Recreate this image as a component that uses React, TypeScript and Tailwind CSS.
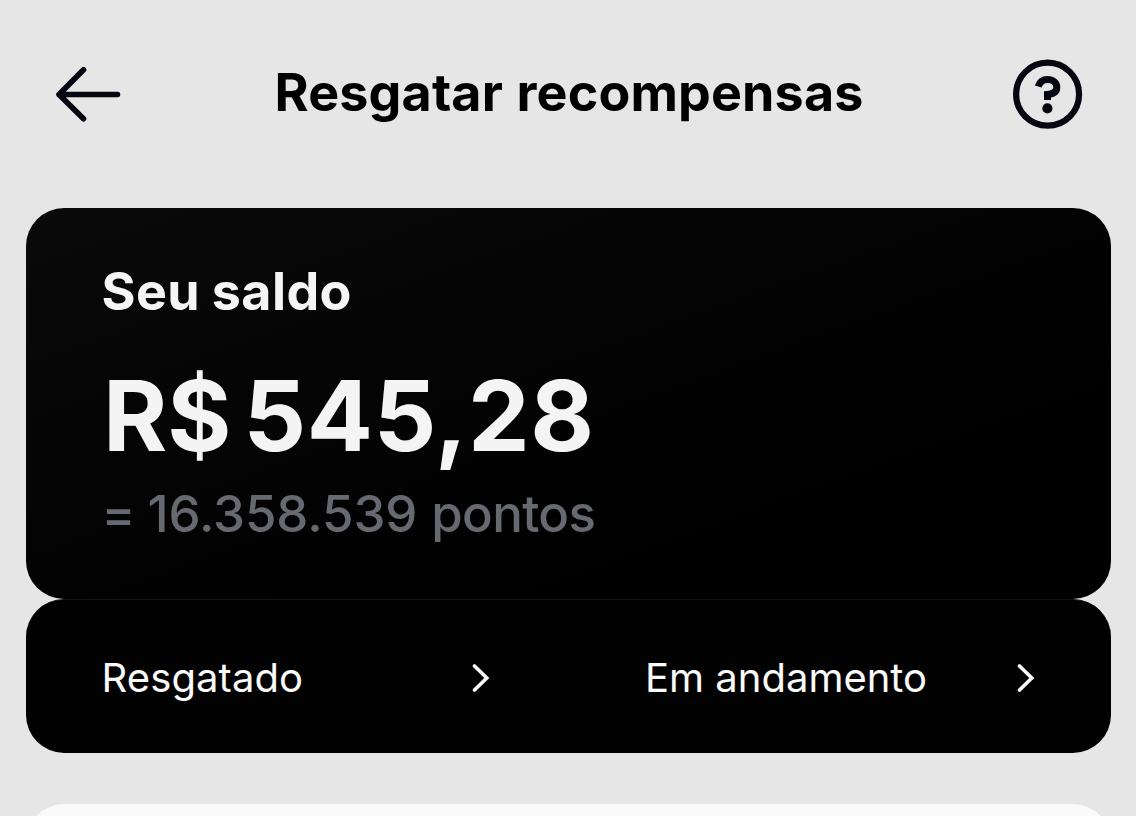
import React from "react";

const ArrowLeft = () => (
  <svg className="h-[60px] w-[68px]" viewBox="0 0 68 60" fill="none">
    <path
      d="M29.5 5.8 L5 30.5 L29.5 54.8 M5 30.5 H63.5"
      stroke="#05060f"
      strokeWidth="5.6"
      strokeLinecap="round"
      strokeLinejoin="round"
    />
  </svg>
);

const HelpCircle = () => (
  <svg className="h-[70px] w-[70px]" viewBox="0 0 70 70" fill="none">
    <circle cx="34.6" cy="35.2" r="31.5" stroke="#05060f" strokeWidth="6.2" />
    <path
      d="M25.2 27.6 C26.6 22.8 30 20.4 34.4 20.4 C40 20.4 43.8 23.6 43.8 28.2 C43.8 32.6 41 34.9 34.5 35.4 V41"
      stroke="#05060f"
      strokeWidth="7"
    />
    <circle cx="34.4" cy="49.4" r="5.1" fill="#05060f" />
  </svg>
);

const ChevronRight = () => (
  <svg className="h-[30px] w-[18px]" viewBox="0 0 18 30" fill="none">
    <path
      d="M2.5 3 L14.8 15 L2.5 27"
      stroke="#fafafa"
      strokeWidth="3.6"
      strokeLinecap="round"
    />
  </svg>
);

const App = () => {
  return (
    <div className="flex h-[816px] w-[1136px] flex-col overflow-hidden bg-[#e6e6e6] font-['Inter',sans-serif]">
      <header className="flex h-[188px] shrink-0 items-center justify-between pl-[54px] pr-[53px]">
        <ArrowLeft />
        <h1 className="mb-[3px] ml-[3px] text-[52px] leading-[60px] font-bold tracking-[0.15px] text-black [word-spacing:1px]">
          Resgatar recompensas
        </h1>
        <HelpCircle />
      </header>

      <main className="flex flex-1 flex-col px-[25.5px] pt-5">
        {/* balance */}
        <section className="h-[391px] shrink-0 rounded-[38px] bg-linear-to-br from-[#0a0a0a] via-[#030303] to-black pl-[76px] pt-[54px]">
          <h2 className="text-[52px] leading-[60px] font-bold tracking-[0.4px] text-[#f5f5f5] [word-spacing:-1px]">
            Seu saldo
          </h2>
          <p className="mt-[33.5px] flex gap-[12px] pl-[1.5px] text-[98px] leading-[120px] font-bold text-[#f5f4f5]">
            <span>R$</span>
            <span className="tracking-[0.6px]">545,28</span>
          </p>
          <p className="mt-[8px] flex text-[51px] leading-[60px] font-medium text-[#666970]">
            <span className="w-[46px]">=</span>
            <span className="mr-[14px] tracking-[-0.1px]">16.358.539</span>
            <span className="tracking-[-0.7px]">pontos</span>
          </p>
        </section>

        <section className="grid h-[154px] shrink-0 grid-cols-2 rounded-[38px] border-t border-[#121212] bg-[#020202] pt-[2px] text-[40px] leading-[48px] text-[#fafafa]">
          <a className="flex items-center justify-between pl-[76px] pr-[78px]">
            <span className="tracking-[0.1px]">Resgatado</span>
            <ChevronRight />
          </a>
          <a className="flex items-center justify-between pl-[77px] pr-[76px]">
            <span>Em andamento</span>
            <ChevronRight />
          </a>
        </section>

        {/* next card, cut by the screen */}
        <section className="mt-[51px] h-20 shrink-0 rounded-t-[38px] bg-[#fafafa]" />
      </main>
    </div>
  );
};

export default App;
